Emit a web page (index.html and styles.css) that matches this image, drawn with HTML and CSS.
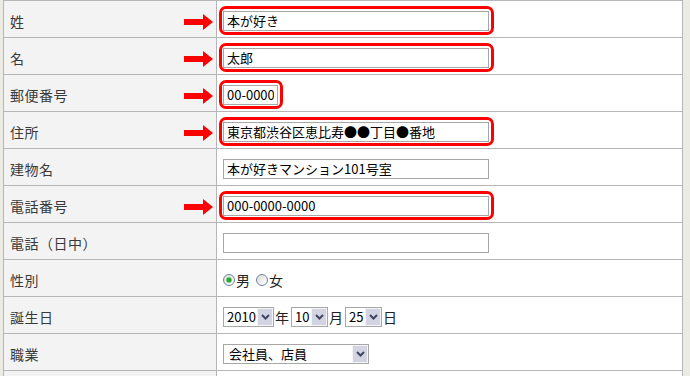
FILE: index.html
```html
<!DOCTYPE html>
<html lang="ja">
<head>
<meta charset="utf-8">
<title>お客様情報</title>
<link rel="stylesheet" href="styles.css">
</head>
<body>
<div class="sheet">
  <div class="row">
    <div class="label"><span>姓</span><svg class="arrow" width="29" height="16" viewBox="0 0 29 16"><path d="M0 5H19V0L29 8L19 16V11H0Z"/></svg></div>
    <div class="value"><span class="mark"><input class="text" type="text" value="本が好き"></span></div>
  </div>
  <div class="row">
    <div class="label"><span>名</span><svg class="arrow" width="29" height="16" viewBox="0 0 29 16"><path d="M0 5H19V0L29 8L19 16V11H0Z"/></svg></div>
    <div class="value"><span class="mark"><input class="text" type="text" value="太郎"></span></div>
  </div>
  <div class="row">
    <div class="label"><span>郵便番号</span><svg class="arrow" width="29" height="16" viewBox="0 0 29 16"><path d="M0 5H19V0L29 8L19 16V11H0Z"/></svg></div>
    <div class="value"><span class="mark"><input class="text zip" type="text" value="00-0000"></span></div>
  </div>
  <div class="row">
    <div class="label"><span>住所</span><svg class="arrow" width="29" height="16" viewBox="0 0 29 16"><path d="M0 5H19V0L29 8L19 16V11H0Z"/></svg></div>
    <div class="value"><span class="mark"><input class="text" type="text" value="東京都渋谷区恵比寿●●丁目●番地"></span></div>
  </div>
  <div class="row">
    <div class="label"><span>建物名</span></div>
    <div class="value"><input class="text" type="text" value="本が好きマンション101号室"></div>
  </div>
  <div class="row">
    <div class="label"><span>電話番号</span><svg class="arrow" width="29" height="16" viewBox="0 0 29 16"><path d="M0 5H19V0L29 8L19 16V11H0Z"/></svg></div>
    <div class="value"><span class="mark"><input class="text" type="text" value="000-0000-0000"></span></div>
  </div>
  <div class="row">
    <div class="label"><span>電話（日中）</span></div>
    <div class="value"><input class="text" type="text" value=""></div>
  </div>
  <div class="row">
    <div class="label"><span>性別</span></div>
    <div class="value">
      <label class="choice"><input class="radio" type="radio" name="sex" checked>男</label>
      <label class="choice"><input class="radio" type="radio" name="sex">女</label>
    </div>
  </div>
  <div class="row">
    <div class="label"><span>誕生日</span></div>
    <div class="value">
      <span class="select w-year"><span class="sv">2010</span><span class="sb"><svg width="9" height="6" viewBox="0 0 9 6"><path d="M1 1L4.5 4.5L8 1"/></svg></span></span><span class="unit">年</span><span class="select w-md"><span class="sv">10</span><span class="sb"><svg width="9" height="6" viewBox="0 0 9 6"><path d="M1 1L4.5 4.5L8 1"/></svg></span></span><span class="unit">月</span><span class="select w-md"><span class="sv">25</span><span class="sb"><svg width="9" height="6" viewBox="0 0 9 6"><path d="M1 1L4.5 4.5L8 1"/></svg></span></span><span class="unit">日</span>
    </div>
  </div>
  <div class="row">
    <div class="label"><span>職業</span></div>
    <div class="value">
      <span class="select w-job"><span class="sv job">会社員、店員</span><span class="sb"><svg width="9" height="6" viewBox="0 0 9 6"><path d="M1 1L4.5 4.5L8 1"/></svg></span></span>
    </div>
  </div>
  <div class="row">
    <div class="label"><span></span></div>
    <div class="value"></div>
  </div>
</div>
</body>
</html>
```
FILE: styles.css
```css
html, body {
  margin: 0;
  padding: 0;
  height: 100%;
  overflow: hidden;
}
body {
  background: #ecebe3;
  font-family: "Noto Sans CJK JP", "Noto Sans", sans-serif;
  color: #000;
}
.sheet {
  margin-left: 3px;
  width: 680px;
  box-sizing: border-box;
  border-top: 1px solid #b6b6b6;
  border-left: 1px solid #b6b6b6;
  border-right: 1px solid #b6b6b6;
}
.row {
  display: grid;
  grid-template-columns: 213px 1fr;
  height: 37px;
  box-sizing: border-box;
  border-bottom: 1px solid #b6b6b6;
}
.label {
  background: #f3f3f3;
  border-right: 1px solid #b6b6b6;
  display: flex;
  align-items: center;
  justify-content: space-between;
  padding: 3px 3px 0 6px;
  font-size: 14px;
  letter-spacing: 0.5px;
  color: #3a3a3a;
}
.arrow {
  fill: #f00;
  margin-top: 3px;
}
.value {
  background: #fff;
  display: flex;
  align-items: center;
  padding: 3px 0 0 6px;
  font-size: 14px;
  color: #222;
}
.mark {
  position: relative;
  display: inline-flex;
}
.mark::before {
  content: "";
  position: absolute;
  top: -5px;
  left: -4px;
  right: -5px;
  bottom: -4px;
  border: 3px solid #f00;
  border-radius: 7px;
  pointer-events: none;
}
.text {
  width: 266px;
  height: 20px;
  box-sizing: border-box;
  border: 1px solid #a7a7a7;
  padding: 0 3px;
  margin: 0;
  font-family: "Noto Sans CJK JP", "Noto Sans", sans-serif;
  font-size: 13px;
  color: #000;
  background: #fff;
  outline: none;
}
.zip {
  width: 55px;
}
.choice {
  display: inline-flex;
  align-items: center;
  margin-right: 6px;
}
.radio {
  appearance: none;
  -webkit-appearance: none;
  width: 12px;
  height: 12px;
  margin: 0 1px 0 0;
  border: 1px solid #6a85a5;
  border-radius: 50%;
  background: linear-gradient(135deg, #dcdcd4, #ffffff);
  box-sizing: border-box;
}
.radio:checked {
  background: radial-gradient(circle, #27a827 0, #27a827 2px, #9ad69a 2.8px, transparent 3.3px), linear-gradient(135deg, #dcdcd4, #ffffff);
}
.select {
  display: inline-flex;
  height: 20px;
  box-sizing: border-box;
  border: 1px solid #a7a7a7;
  background: #fff;
}
.w-year { width: 51px; }
.w-md { width: 37px; }
.w-job { width: 146px; }
.sv {
  flex: 1;
  padding-left: 3px;
  font-size: 13px;
  line-height: 18px;
  color: #000;
  white-space: nowrap;
  overflow: hidden;
}
.sv.job {
  padding-left: 5px;
}
.sb {
  width: 16px;
  box-sizing: border-box;
  background: #d3d4e1;
  border: 1px solid #f4f4f8;
  display: flex;
  align-items: center;
  justify-content: center;
}
.sb svg {
  fill: none;
  stroke: #3f4660;
  stroke-width: 2;
}
.unit {
  margin: 0 2px 0 1px;
  font-size: 14px;
}
```
